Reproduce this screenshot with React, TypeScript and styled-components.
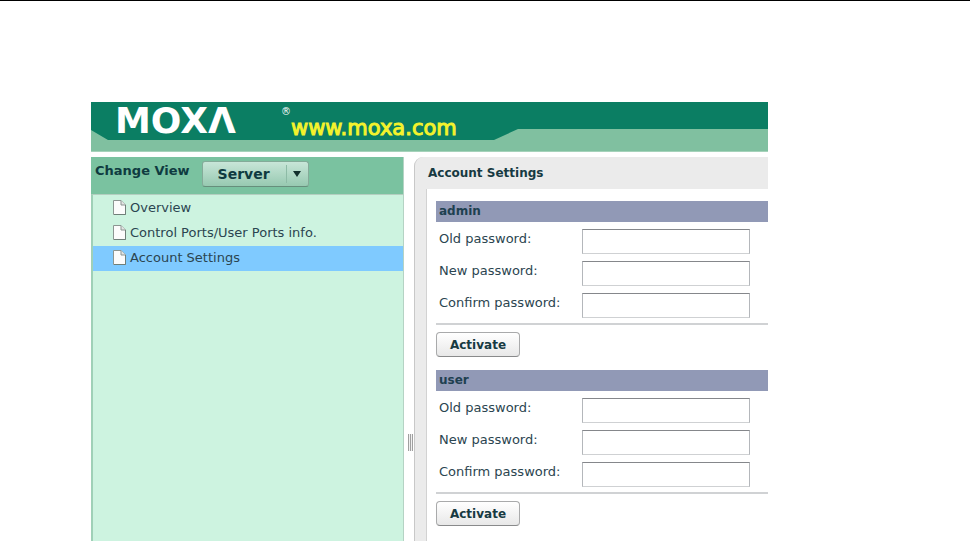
import React, { useId } from "react";
import styled, { createGlobalStyle } from "styled-components";

const GlobalStyle = createGlobalStyle`
  * { box-sizing: border-box; }
  body {
    margin: 0;
    background: #ffffff;
    color: #2b4550;
    font-family: "DejaVu Sans", Verdana, sans-serif;
    font-size: 13px;
    line-height: 16px;
  }
`;

const Page = styled.div`
  display: flex;
  flex-direction: column;
  height: 100vh;
  min-height: 400px;
  overflow: hidden;
  border-top: 1px solid #000000;
  padding: 101px 202px 0 91px;
`;

const Banner = styled.header`
  position: relative;
  flex: none;
  height: 50px;
  background: #80c0a0;
  border-bottom: 1px solid #a5d2ba;
  &::before {
    content: "";
    position: absolute;
    inset: 0;
    background: #0b7e63;
    clip-path: polygon(0 0, 100% 0, 100% 27px, 427px 27px, 403px 38px, 17px 38px, 0 28px);
  }
`;

const Brand = styled.div`
  position: relative;
  display: flex;
  align-items: flex-start;
  padding-left: 24px;
`;

const Logo = styled.div`
  display: flex;
  justify-content: space-between;
  width: 176px;
  color: #ffffff;
`;

const Wordmark = styled.span`
  font-size: 36px;
  font-weight: bold;
  line-height: 38px;
`;

const Registered = styled.sup`
  padding-top: 4px;
  font-size: 10px;
  line-height: 12px;
`;

const SiteLink = styled.a`
  padding-top: 15px;
  color: #f4f32c;
  font-size: 21px;
  line-height: 22px;
  text-decoration: none;
  -webkit-text-stroke: 1px #f4f32c;
`;

const Workspace = styled.div`
  display: flex;
  flex: 1;
  min-height: 0;
  margin-top: 5px;
`;

const Sidebar = styled.aside`
  display: flex;
  flex-direction: column;
  flex: none;
  width: 313px;
  background: #cdf3e0;
  border-right: 1px solid #b5d3c4;
`;

const ViewBar = styled.div`
  display: flex;
  align-items: flex-start;
  gap: 12px;
  height: 37px;
  padding: 4px 4px 0;
  background: #7ac2a0;
`;

const ViewLabel = styled.label`
  padding-top: 2px;
  color: #0f3b40;
  font-weight: bold;
`;

const SelectBox = styled.div`
  position: relative;
  display: flex;
`;

const ViewSelect = styled.select`
  appearance: none;
  width: 107px;
  height: 26px;
  padding: 0 28px 0 15px;
  border: 1px solid #84ab99;
  border-bottom-color: #668f7c;
  border-radius: 3px;
  background: linear-gradient(#c8e6d8, #97c9b1);
  color: #0f3b40;
  font: bold 14px/16px "DejaVu Sans", Verdana, sans-serif;
`;

const SelectArrow = styled.span`
  position: absolute;
  top: 4px;
  right: 1px;
  bottom: 4px;
  display: flex;
  align-items: center;
  justify-content: center;
  width: 22px;
  border-left: 1px solid #8dbba6;
  pointer-events: none;
`;

const Tree = styled.ul`
  flex: 1;
  margin: 0;
  padding: 1px 0 0;
  list-style: none;
  border-top: 1px solid #b4cec0;
  border-left: 2px solid #9fd0b7;
`;

const TreeItem = styled.li<{ $selected?: boolean }>`
  display: flex;
  height: 25px;
  background: ${(p) => (p.$selected ? "#7fcaff" : "transparent")};
`;

const TreeLink = styled.a`
  display: flex;
  flex: 1;
  align-items: center;
  gap: 4px;
  padding: 0 0 2px 20px;
  color: #2b4550;
  text-decoration: none;
`;

const Splitter = styled.div`
  display: flex;
  flex: none;
  justify-content: center;
  width: 10px;
  padding-top: 277px;
`;

const Grip = styled.span`
  width: 5px;
  height: 17px;
  margin-left: 2px;
  background: repeating-linear-gradient(90deg, #a0a0a0 0 1px, #f0f0f0 1px 2px);
`;

const Panel = styled.main`
  display: flex;
  flex-direction: column;
  flex: 1;
  min-width: 0;
  padding-left: 11px;
  background: #ebebeb;
  border-left: 1px solid #c8c8c8;
  border-top-left-radius: 9px;
`;

const PanelTitle = styled.h1`
  flex: none;
  margin: 0;
  padding: 8px 2px;
  color: #173a42;
  font-size: 12px;
  line-height: 16px;
`;

const PanelBody = styled.div`
  display: flex;
  flex: 1;
  flex-direction: column;
  gap: 13px;
  min-height: 0;
  padding: 12px 0 0 9px;
  background: #ffffff;
  border-left: 1px solid #d2d2d2;
`;

const AccountForm = styled.form`
  display: flex;
  flex: none;
  flex-direction: column;
  align-items: flex-start;
`;

const SectionTitle = styled.h2`
  align-self: stretch;
  margin: 0 0 7px;
  padding: 2px 3px 3px;
  background: #9199b6;
  color: #1e4050;
  font-size: 12px;
  line-height: 16px;
`;

const Fields = styled.div`
  display: grid;
  gap: 7px;
`;

const Row = styled.div`
  display: grid;
  grid-template-columns: 143px 168px;
  align-items: start;
  padding-left: 3px;
`;

const FieldLabel = styled.label`
  padding-top: 2px;
`;

const PasswordInput = styled.input`
  width: 100%;
  height: 25px;
  padding: 2px 4px;
  border: 1px solid #b4b7bb;
  border-top-color: #85878b;
  border-bottom-color: #cfd1d3;
  border-radius: 0;
  background: #ffffff;
  font: inherit;
`;

const Divider = styled.hr`
  align-self: stretch;
  height: 2px;
  margin: 5px 0 7px;
  border: 0;
  background: #d0d2d4;
`;

const ActionButton = styled.button`
  width: 84px;
  height: 25px;
  padding: 0;
  border: 1px solid #a9aaab;
  border-bottom-color: #898a8b;
  border-radius: 4px;
  background: linear-gradient(#ffffff, #e8e8e8);
  color: #173a42;
  font: bold 12px/16px "DejaVu Sans", Verdana, sans-serif;
`;

const PageIcon = () => (
  <svg width="13" height="15" viewBox="0 0 13 15" aria-hidden="true">
    <path d="M0.500 0.500H8L12.500 5V14.500H0.500Z" fill="#fcfcfc" stroke="#8c9692" />
    <path d="M8 0.500V5H12.500" fill="#e4e4e4" stroke="#8c9692" />
    <path d="M1 14.500H12.500V5" fill="none" stroke="#6f7f78" />
  </svg>
);

const fields = ["Old password:", "New password:", "Confirm password:"];
const pages = ["Overview", "Control Ports/User Ports info.", "Account Settings"];

const AccountSection = ({ name }: { name: string }) => {
  const id = useId();
  return (
    <AccountForm onSubmit={(e) => e.preventDefault()}>
      <SectionTitle>{name}</SectionTitle>
      <Fields>
        {fields.map((label, i) => (
          <Row key={label}>
            <FieldLabel htmlFor={`${id}-${i}`}>{label}</FieldLabel>
            <PasswordInput id={`${id}-${i}`} type="password" />
          </Row>
        ))}
      </Fields>
      <Divider />
      <ActionButton type="submit">Activate</ActionButton>
    </AccountForm>
  );
};

export default function App() {
  return (
    <>
      <GlobalStyle />
      <Page>
        <Banner>
          <Brand>
            <Logo>
              <Wordmark>MOXΛ</Wordmark>
              <Registered>®</Registered>
            </Logo>
            <SiteLink href="#home">www.moxa.com</SiteLink>
          </Brand>
        </Banner>
        <Workspace>
          <Sidebar>
            <ViewBar>
              <ViewLabel htmlFor="view">Change View</ViewLabel>
              <SelectBox>
                <ViewSelect id="view" defaultValue="Server">
                  <option>Server</option>
                </ViewSelect>
                <SelectArrow>
                  <svg width="8" height="6" viewBox="0 0 8 6" aria-hidden="true">
                    <path d="M0 0H8L4 6Z" fill="#12302c" />
                  </svg>
                </SelectArrow>
              </SelectBox>
            </ViewBar>
            <Tree>
              {pages.map((page) => (
                <TreeItem key={page} $selected={page === "Account Settings"}>
                  <TreeLink href="#view">
                    <PageIcon />
                    {page}
                  </TreeLink>
                </TreeItem>
              ))}
            </Tree>
          </Sidebar>
          <Splitter>
            <Grip />
          </Splitter>
          <Panel>
            <PanelTitle>Account Settings</PanelTitle>
            <PanelBody>
              <AccountSection name="admin" />
              <AccountSection name="user" />
            </PanelBody>
          </Panel>
        </Workspace>
      </Page>
    </>
  );
}
